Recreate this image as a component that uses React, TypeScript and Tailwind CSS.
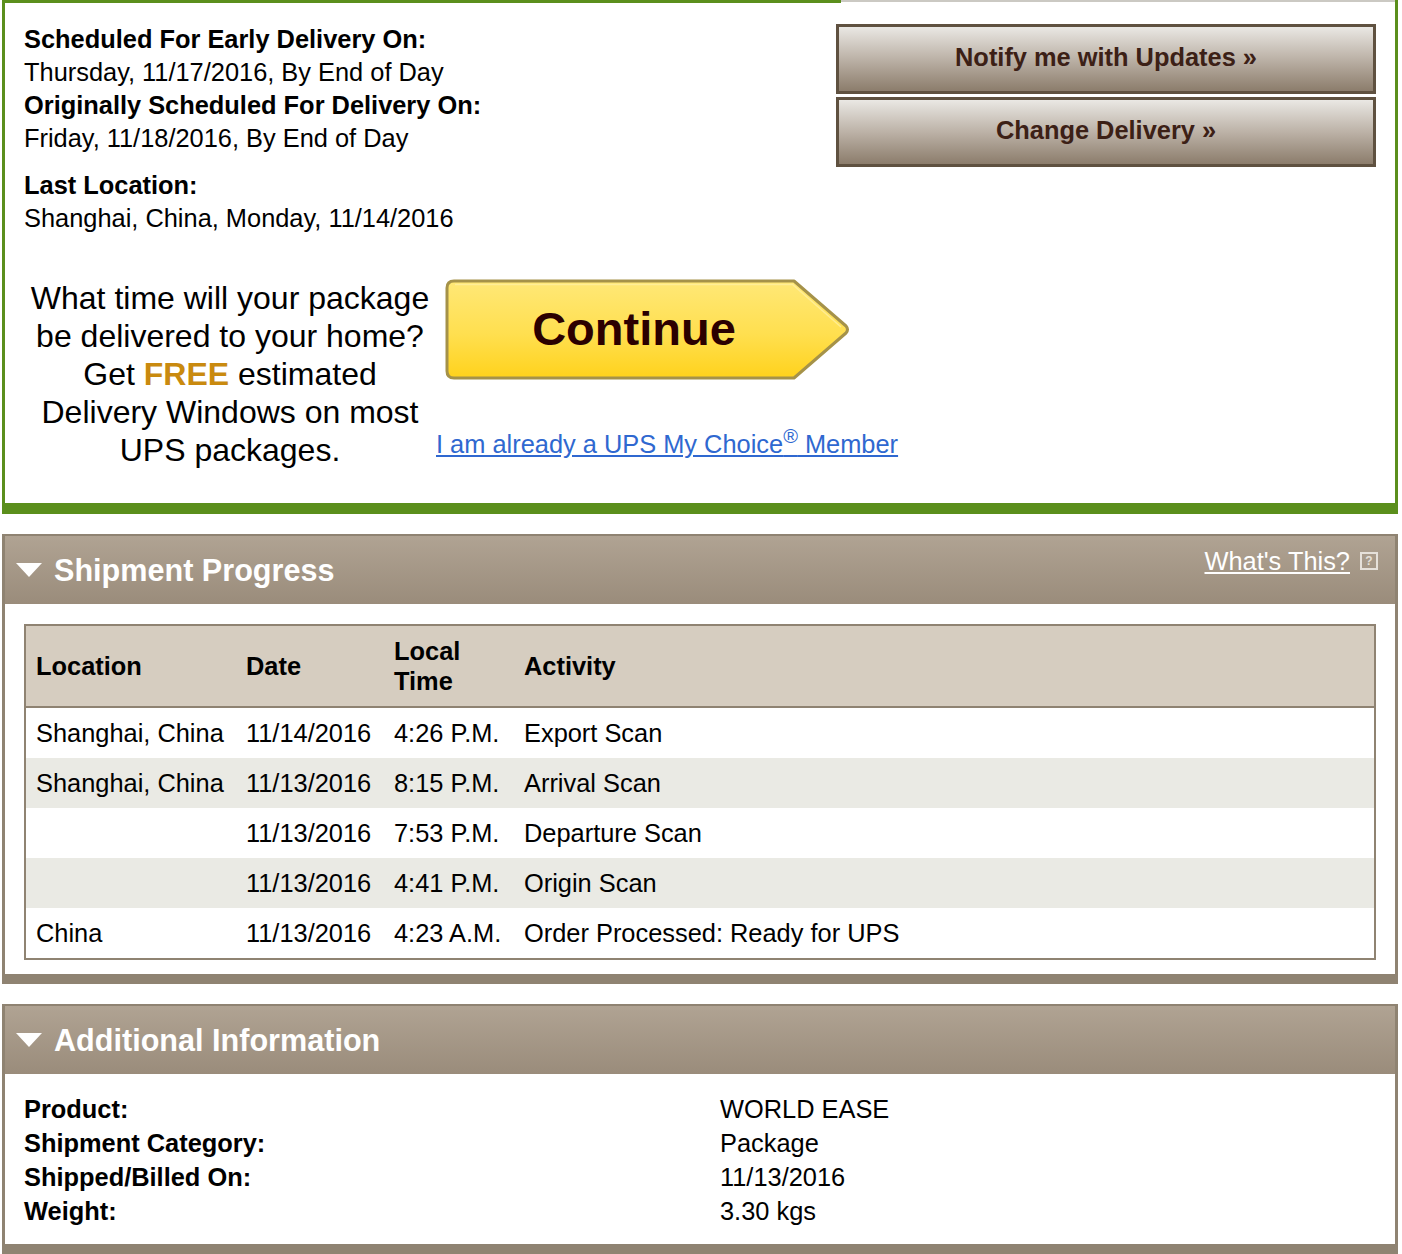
import { FC } from 'react'

interface Scan {
  location: string
  date: string
  time: string
  activity: string
}

const scans: Scan[] = [
  { location: 'Shanghai, China', date: '11/14/2016', time: '4:26 P.M.', activity: 'Export Scan' },
  { location: 'Shanghai, China', date: '11/13/2016', time: '8:15 P.M.', activity: 'Arrival Scan' },
  { location: '', date: '11/13/2016', time: '7:53 P.M.', activity: 'Departure Scan' },
  { location: '', date: '11/13/2016', time: '4:41 P.M.', activity: 'Origin Scan' },
  { location: 'China', date: '11/13/2016', time: '4:23 A.M.', activity: 'Order Processed: Ready for UPS' },
]

const info = [
  ['Product:', 'WORLD EASE'],
  ['Shipment Category:', 'Package'],
  ['Shipped/Billed On:', '11/13/2016'],
  ['Weight:', '3.30 kgs'],
]

const GreyButton: FC<{ label: string }> = ({ label }) => (
  <button className="h-[70px] w-full border-[3px] border-[#5f5140] bg-gradient-to-b from-[#eae8e4] via-[#bcb2a7] to-[#8c7d6c] pb-[3px] text-[25.4px] font-bold text-[#3c2016]">
    {label}
  </button>
)

const ContinueButton: FC = () => (
  <div className="relative ml-[9px] h-[101px] w-[406px]">
    <svg className="absolute inset-0" width="406" height="101" viewBox="0 0 406 101">
      <defs>
        <linearGradient id="cont" x1="0" y1="0" x2="0" y2="1">
          <stop offset="0" stopColor="#ffe877" />
          <stop offset="0.55" stopColor="#ffdf4f" />
          <stop offset="1" stopColor="#ffd21c" />
        </linearGradient>
      </defs>
      <path
        d="M9 2 H349 L401 47 Q404 50.5 401 54 L349 99 H9 Q2 99 2 92 V9 Q2 2 9 2 Z"
        fill="url(#cont)"
        stroke="#a59249"
        strokeWidth="3"
        strokeLinejoin="round"
      />
      <path d="M10 5.5 H347.5 L396 48" fill="none" stroke="#fff1a6" strokeWidth="1.5" opacity="0.7" />
    </svg>
    <span className="relative flex h-full items-center justify-center pr-[28px] text-[47px] font-bold text-[#2b0000]">
      Continue
    </span>
  </div>
)

const PanelHeader: FC<{ title: string; help?: boolean }> = ({ title, help }) => (
  <div className="flex h-[68px] justify-between bg-gradient-to-b from-[#b0a393] to-[#9a8c7b] pl-[11px] pr-[17px]">
    <div className="flex items-center gap-[12px]">
      <svg width="26" height="14" viewBox="0 0 26 14">
        <path d="M0 0 H26 L13 14 Z" fill="#ffffff" />
      </svg>
      <h2 className="text-[30.6px] font-bold leading-none text-white">{title}</h2>
    </div>
    {help && (
      <div className="flex items-center gap-[10px] self-start pt-[10px] leading-[30px]">
        <a className="text-white underline">What's This?</a>
        <span className="flex h-[18px] w-[18px] items-center justify-center border-2 border-[#e6e1da] text-[12px] font-bold leading-none text-[#e6e1da]">
          ?
        </span>
      </div>
    )}
  </div>
)

const cols = 'grid grid-cols-[210px_148px_130px_1fr]'

const App: FC = () => (
  <div className="w-[1402px] bg-white pl-[2px] pr-[4px] font-['Liberation_Sans',Arial,Helvetica,sans-serif] text-[25.4px] text-black">
    <section className="border-x-[3px] border-b-[11px] border-[#5b8f1c]">
      <div className="flex h-[3px]">
        <div className="w-[836px] bg-[#5b8f1c]" />
        <div className="h-[2px] flex-1 bg-[#cbc9c3]" />
      </div>
      <div className="flex justify-between px-[19px] pt-[20px]">
        <div className="leading-[33px]">
          <div className="font-bold">Scheduled For Early Delivery On:</div>
          <div>Thursday, 11/17/2016, By End of Day</div>
          <div className="font-bold">Originally Scheduled For Delivery On:</div>
          <div>Friday, 11/18/2016, By End of Day</div>
          <div className="mt-[14px] font-bold">Last Location:</div>
          <div>Shanghai, China, Monday, 11/14/2016</div>
        </div>
        <div className="flex w-[540px] flex-col gap-[3px] pt-[1px]">
          <GreyButton label="Notify me with Updates »" />
          <GreyButton label="Change Delivery »" />
        </div>
      </div>
      <div className="mt-[44px] flex pb-[34px] pl-[19px]">
        <p className="w-[412px] text-center text-[32px] leading-[38px]">
          What time will your package be delivered to your home? Get{' '}
          <span className="font-bold text-[#c98a0f]">FREE</span> estimated Delivery Windows on most UPS packages.
        </p>
        <div className="flex flex-col">
          <ContinueButton />
          <a className="mt-[49px] leading-[30px] text-[#2f68d0] underline">
            I am already a UPS My Choice<sup className="text-[20px]">®</sup> Member
          </a>
        </div>
      </div>
    </section>

    <section className="mt-[20px] border-x-[3px] border-t-2 border-b-[10px] border-[#8f8372]">
      <PanelHeader title="Shipment Progress" help />
      <div className="px-[19px] pb-[14px] pt-[20px]">
        <div className="border-2 border-[#8f8372]">
          <div className={`${cols} h-[82px] items-center border-b-2 border-[#8f8372] bg-[#d6cdc0] font-bold leading-[30px]`}>
            <div className="pl-[10px]">Location</div>
            <div className="pl-[10px]">Date</div>
            <div className="w-[80px] pl-[10px]">Local Time</div>
            <div className="pl-[10px]">Activity</div>
          </div>
          {scans.map((s, i) => (
            <div key={i} className={`${cols} h-[50px] items-center ${i % 2 === 1 ? 'bg-[#eaeae4]' : 'bg-white'}`}>
              <div className="pl-[10px]">{s.location}</div>
              <div className="pl-[10px]">{s.date}</div>
              <div className="pl-[10px]">{s.time}</div>
              <div className="pl-[10px]">{s.activity}</div>
            </div>
          ))}
        </div>
      </div>
    </section>

    <section className="mt-[20px] border-x-[3px] border-t-2 border-b-[10px] border-[#8f8372]">
      <PanelHeader title="Additional Information" />
      <div className="grid grid-cols-[696px_1fr] px-[19px] pb-[16px] pt-[18px] leading-[34px]">
        {info.map(([label, value]) => (
          <div key={label} className="contents">
            <div className="font-bold">{label}</div>
            <div>{value}</div>
          </div>
        ))}
      </div>
    </section>
  </div>
)

export default App
